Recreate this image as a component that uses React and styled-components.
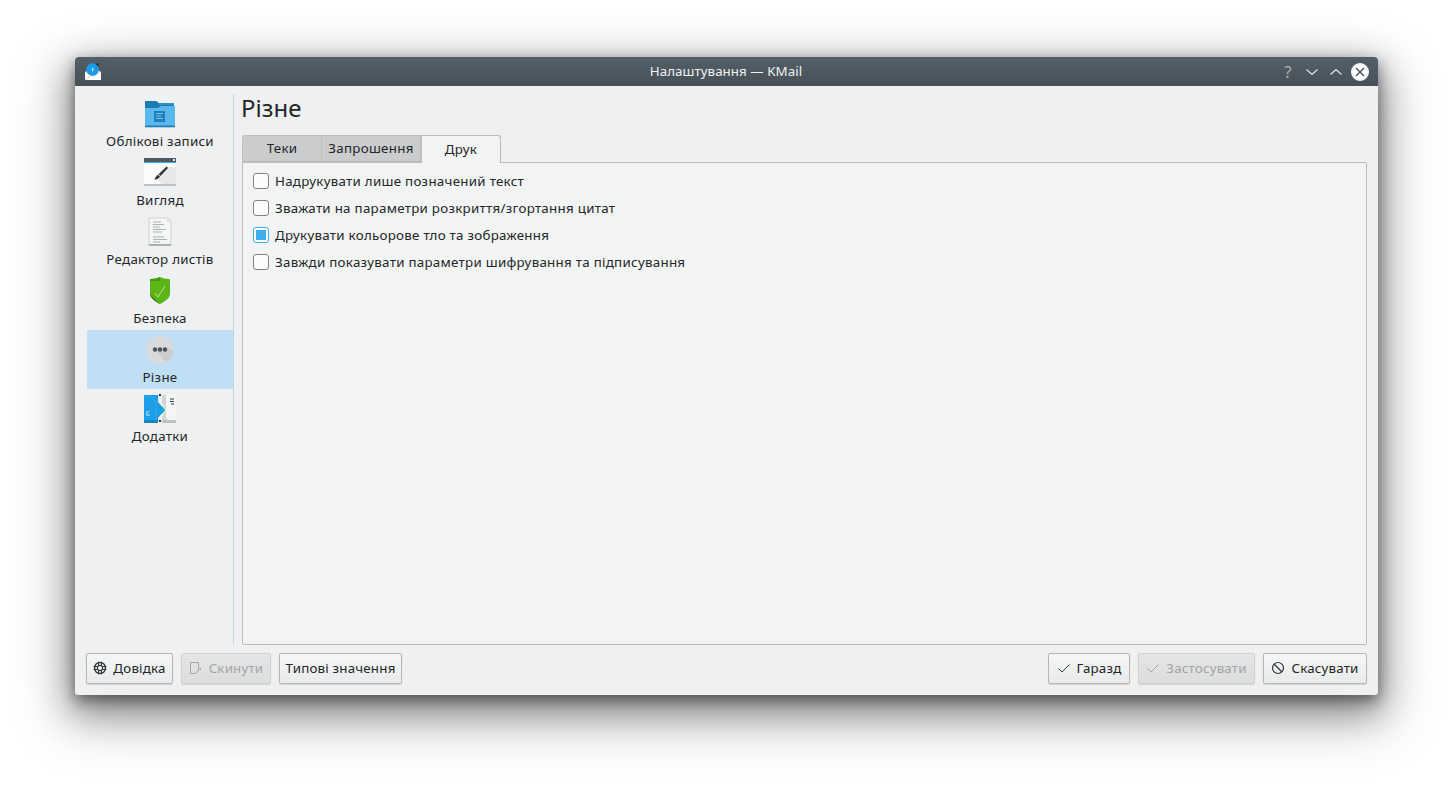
import React from "react";
import styled, { createGlobalStyle } from "styled-components";

const Global = createGlobalStyle`
  html, body { margin: 0; padding: 0; background: #fff; }
  body { font-family: "Noto Sans", sans-serif; font-size: 13.33px; letter-spacing: .28px; color: #232627; }
  * { box-sizing: border-box; }
`;
const Page = styled.div`
  width: 1453px; height: 788px; padding: 57px 75px 93px; overflow: hidden; background: #fff;
`;
const Win = styled.div`
  width: 1303px; height: 638px; display: flex; flex-direction: column;
  background: #eff0f1; border-radius: 4px 4px 3px 3px;
  box-shadow: 0 5px 14px rgba(0,0,0,.42), 0 14px 34px 4px rgba(0,0,0,.34), 0 18px 56px 10px rgba(0,0,0,.22);
`;
const TitleBar = styled.div`
  height: 29px; flex: none; display: flex; align-items: center; position: relative; padding: 0 9px 0 9px;
  background: linear-gradient(#535f68, #475057); border-radius: 4px 4px 0 0; color: #eff0f1;
`;
const TitleText = styled.div`
  position: absolute; left: 0; right: 0; top: 5px; text-align: center; line-height: 18px; letter-spacing: .05px; padding-right: 1px;
`;
const TitleIcons = styled.div`
  margin-left: auto; display: flex; align-items: center; gap: 6px; position: relative;
`;
const Help = styled.span`
  width: 18px; text-align: center; font-size: 16px; line-height: 18px; color: #aab0b4;
`;
const Body = styled.div`
  flex: 1; min-height: 0; display: flex; flex-direction: column; padding: 8px 11px 11px 11px;
`;
const Main = styled.div`
  flex: 1; min-height: 0; display: flex;
`;
const Sidebar = styled.div`
  width: 147px; margin-left: 1px; flex: none; border-right: 1px solid #c5d5e0;
`;
const Item = styled.div`
  height: 59px; display: flex; flex-direction: column; align-items: center; padding-top: 5px;
  background: ${p => (p.$on ? "#c0def4" : "transparent")};
  svg { display: block; flex: none; }
`;
const ItemLabel = styled.div`
  margin-top: 1px; line-height: 18px; white-space: nowrap;
`;
const Content = styled.div`
  flex: 1; min-width: 0; display: flex; flex-direction: column; padding-left: 8px;
`;
const Heading = styled.h1`
  margin: 0 0 8px -1px; font-weight: 400; font-size: 24px; line-height: 27px; height: 33px; letter-spacing: 0;
`;
const Tabs = styled.div`
  display: flex; height: 28px; flex: none; position: relative; z-index: 1; margin-bottom: -1px;
`;
const Tab = styled.div`
  width: ${p => p.$w}px; height: ${p => (p.$on ? 28 : 27)}px;
  display: flex; align-items: center; justify-content: center;
  background: ${p => (p.$on ? "#f2f3f3" : "#cbcccd")};
  border: 1px solid ${p => (p.$on ? "#b9bbbc" : "#bdbfc0")};
  border-bottom: ${p => (p.$on ? "none" : "1px solid #b9bbbc")};
  border-left: ${p => (p.$first || p.$on ? "" : "none")};
  border-radius: ${p => (p.$first ? "3px 0 0 0" : p.$on ? "0 3px 0 0" : "0")};
  padding-bottom: 1px;
`;
const Panel = styled.div`
  flex: 1; min-height: 0; background: #f2f3f3; border: 1px solid #b9bbbc; border-radius: 0 2px 2px 2px;
  padding: 4px 10px; display: flex; flex-direction: column;
`;
const CheckRow = styled.label`
  height: 27px; display: flex; align-items: center; gap: 6px; white-space: nowrap;
`;
const Box = styled.span`
  width: 16px; height: 16px; flex: none; display: flex; align-items: center; justify-content: center;
  border-radius: 3px; background: #fcfcfc;
  border: 1px solid ${p => (p.$on ? "#3daee9" : "#7f8284")};
  &::after { content: ""; width: 10px; height: 10px; background: ${p => (p.$on ? "#3daee9" : "transparent")}; }
`;
const Footer = styled.div`
  flex: none; display: flex; align-items: center; padding-top: 8px;
`;
const Group = styled.div`
  display: flex; gap: 8px; margin-left: ${p => (p.$right ? "auto" : 0)};
`;
const Btn = styled.div`
  height: 31px; width: ${p => p.$w}px; display: flex; align-items: center; justify-content: center; gap: 6px;
  border-radius: 2px; white-space: nowrap; letter-spacing: .2px; padding-bottom: 1px;
  color: ${p => (p.$off ? "#a3a5a6" : "#232627")};
  border: 1px solid ${p => (p.$off ? "#d0d1d2" : "#b4b6b7")};
  background: ${p => (p.$off ? "linear-gradient(#e4e5e6,#dcdddd)" : "linear-gradient(#f5f6f6,#e9eaeb)")};
  box-shadow: 0 1px 1px rgba(0,0,0,.12);
  svg { flex: none; display: block; }
`;

const MailIcon = () => (
  <svg width="18" height="18" viewBox="0 0 18 18" style={{ display: "block" }}>
    <path d="M1 9 L9 4 L17 9 V17 H1 Z" fill="#e9ecee" />
    <circle cx="8.500" cy="6.500" r="6.300" fill="#1c9ce8" />
    <path d="M11 0.500 L14.500 0.500 L14.500 4 Z" fill="#22333f" />
    <path d="M1 9.500 L9 14 L17 9.500 V17 H1 Z" fill="#fcfcfc" />
    <path d="M1 17 L7 12.500" stroke="#d5d8da" strokeWidth="1" />
    <path d="M8 4 l2 2.500-2 2.500z" fill="#bfe4f9" />
  </svg>
);
const Chevron = ({ up }) => (
  <svg width="18" height="18" viewBox="0 0 18 18">
    <path d={up ? "M3.500 11.500 L9 6.500 L14.500 11.500" : "M3.500 6.500 L9 11.500 L14.500 6.500"} stroke="#e6e8e9" strokeWidth="1.100" fill="none" />
  </svg>
);
const CloseBtn = () => (
  <svg width="18" height="18" viewBox="0 0 18 18">
    <circle cx="9" cy="9" r="9" fill="#fcfcfc" />
    <path d="M5 5 L13 13 M13 5 L5 13" stroke="#4d565d" strokeWidth="1.500" />
  </svg>
);
const FolderIcon = () => (
  <svg width="32" height="32" viewBox="0 0 32 32">
    <path d="M1 2 H12 L15 4 H30 V11 H1 Z" fill="#1a7cb3" />
    <path d="M15 4 H30 V6 H15 Z" fill="#2d93cd" />
    <path d="M1 9 L14 9 L17 7 H31 V28 H1 Z" fill="#5bb8ed" />
    <rect x="1" y="26.500" width="30" height="1.800" fill="#1f7fb8" />
    <rect x="10" y="12" width="11" height="11" fill="#1f7fb8" />
    <path d="M12 14.500h7M12 17h5M12 19.500h7" stroke="#7cc6ee" strokeWidth="1" />
  </svg>
);
const AppearanceIcon = () => (
  <svg width="32" height="32" viewBox="0 0 32 32">
    <rect x="0" y="0" width="32" height="4" fill="#4e5a63" />
    <rect x="29" y="1" width="2" height="2" fill="#e8eaeb" />
    <rect x="0" y="4" width="32" height="1.200" fill="#3daee9" />
    <rect x="0" y="5" width="32" height="23" fill="#fcfcfc" />
    <path d="M12 21 L23 9 H32 V26 H18 Z" fill="#e6e8e9" />
    <rect x="0" y="26" width="32" height="2" fill="#bfc2c4" />
    <path d="M22.500 8.500 C23.500 8.500 24 9.500 23.500 10.500 L16.500 18 L14.500 16.300 Z" fill="#31363b" />
    <path d="M14 16.800 L16 18.600 C15 21 12.500 21.800 10 21.500 C11.500 20.500 11.500 18 14 16.800Z" fill="#31363b" />
  </svg>
);
const DocIcon = () => (
  <svg width="32" height="32" viewBox="0 0 32 32">
    <path d="M5 1 H24 L27 4 V28.500 H5 Z" fill="#f4f5f5" stroke="#cfd1d3" strokeWidth="1" />
    <rect x="5" y="27" width="22" height="1.800" fill="#a9acae" />
    <path d="M23 1 V5 H27" fill="#e1e3e4" />
    <path d="M9 5h8M9 7.500h11M9 10h7M9 12.500h13M9 15h9M9 20h11M9 22.500h14M9 25h7" stroke="#aeb1b3" strokeWidth="1" />
  </svg>
);
const ShieldIcon = () => (
  <svg width="32" height="32" viewBox="0 0 32 32">
    <path d="M16 1 L20 2.500 L25 3 C26 3 26 4 26 4 V18 C26 22 20 26 16 28 C12 26 6 22 6 18 V4 C6 4 6 3 7 3 L12 2.500Z" fill="#5bb514" />
    <path d="M16 1 L12 2.500 L7 3 C6 3 6 4 6 4 V5 L16 5 Z" fill="#4a9416" />
    <path d="M6 4 V18 C6 22 12 26 16 28 L6 18Z" fill="#46801f" />
    <path d="M11 17 L14 21 L21 10" stroke="#c9e8a8" strokeWidth=".900" fill="none" />
  </svg>
);
const MiscIcon = () => (
  <svg width="32" height="32" viewBox="0 0 32 32">
    <circle cx="16" cy="15" r="14" fill="#d8dadb" />
    <path d="M11 15 L22 27 A14 14 0 0 0 30 16 L25 13Z" fill="#caccce" />
    <circle cx="11" cy="14.500" r="2.200" fill="#4d5257" />
    <circle cx="16" cy="14.500" r="2.200" fill="#4d5257" />
    <circle cx="21" cy="14.500" r="2.200" fill="#4d5257" />
  </svg>
);
const PluginIcon = () => (
  <svg width="32" height="32" viewBox="0 0 32 32">
    <rect x="0" y="1" width="14" height="28" fill="#1c9fe8" />
    <rect x="0" y="26" width="14" height="3" fill="#1686c4" />
    <path d="M2 3 H7 L12 8 V26" stroke="#3fa9de" fill="none" strokeWidth="1" />
    <path d="M3 17v5M5 17v1M5 20v2" stroke="#cfeaf9" strokeWidth="1" />
    <path d="M14 8 L21 16 L14 24 Z" fill="#1c9fe8" />
    <path d="M18 1 H32 V29 H18 V23 L22 16 L18 9 Z" fill="#d3d5d7" />
    <path d="M22 1 H32 V26 H24 L22 23 Z" fill="#f4f5f5" />
    <path d="M18.500 12 L21 16 L18.500 20Z" fill="#1abc9c" />
    <rect x="18" y="26" width="14" height="3" fill="#bfc2c4" />
    <path d="M26 5h4M26 7.500h4M27 10h3" stroke="#31363b" strokeWidth="1" />
    <path d="M15 0h2v2h-2zM15 26h2v2h-2z" fill="#31363b" />
  </svg>
);
const LifeIcon = () => (
  <svg width="14" height="14" viewBox="0 0 14 14" fill="none" stroke="#31363b">
    <circle cx="7" cy="7" r="5.500" strokeWidth="1.400" />
    <circle cx="7" cy="7" r="2.600" strokeWidth="1.100" />
    <path d="M5.500 .8V4.500M8.500 .8V4.500M5.500 9.500V13.200M8.500 9.500V13.200M.8 5.500H4.500M.8 8.500H4.500M9.500 5.500H13.200M9.500 8.500H13.200" strokeWidth="1" />
  </svg>
);
const ResetIcon = () => (
  <svg width="14" height="14" viewBox="0 0 14 14" fill="none" stroke="#a3a5a6">
    <path d="M1.500 1.500 H9.500 V9 L6.500 12.500 H1.500 Z" />
    <path d="M12 6.500 l-2 1.500 l2 1.500z" fill="#a3a5a6" stroke="none" />
  </svg>
);
const CheckIcon = ({ off }) => (
  <svg width="14" height="14" viewBox="0 0 14 14" fill="none" stroke={off ? "#a3a5a6" : "#31363b"}>
    <path d="M1.500 7.500 L5 11 L12.500 3.500" strokeWidth="1" />
  </svg>
);
const CancelIcon = () => (
  <svg width="14" height="14" viewBox="0 0 14 14" fill="none" stroke="#31363b" strokeWidth="1.200">
    <circle cx="7" cy="7" r="5.500" />
    <path d="M3 3 L11 11" />
  </svg>
);

const nav = [
  ["Облікові записи", FolderIcon],
  ["Вигляд", AppearanceIcon],
  ["Редактор листів", DocIcon],
  ["Безпека", ShieldIcon],
  ["Різне", MiscIcon],
  ["Додатки", PluginIcon],
];
const checks = [
  ["Надрукувати лише позначений текст", false],
  ["Зважати на параметри розкриття/згортання цитат", false],
  ["Друкувати кольорове тло та зображення", true],
  ["Завжди показувати параметри шифрування та підписування", false],
];

export default function App() {
  return (
    <Page>
      <Global />
      <Win>
        <TitleBar>
          <MailIcon />
          <TitleText>Налаштування — KMail</TitleText>
          <TitleIcons>
            <Help>?</Help>
            <Chevron />
            <Chevron up />
            <CloseBtn />
          </TitleIcons>
        </TitleBar>
        <Body>
          <Main>
            <Sidebar>
              {nav.map(([label, Icon]) => (
                <Item key={label} $on={label === "Різне"}>
                  <Icon />
                  <ItemLabel>{label}</ItemLabel>
                </Item>
              ))}
            </Sidebar>
            <Content>
              <Heading>Різне</Heading>
              <Tabs>
                <Tab $w={80} $first>Теки</Tab>
                <Tab $w={99}>Запрошення</Tab>
                <Tab $w={80} $on>Друк</Tab>
              </Tabs>
              <Panel>
                {checks.map(([label, on]) => (
                  <CheckRow key={label}>
                    <Box $on={on} />
                    {label}
                  </CheckRow>
                ))}
              </Panel>
            </Content>
          </Main>
          <Footer>
            <Group>
              <Btn $w={87}><LifeIcon />Довідка</Btn>
              <Btn $w={90} $off><ResetIcon />Скинути</Btn>
              <Btn $w={123}>Типові значення</Btn>
            </Group>
            <Group $right>
              <Btn $w={82}><CheckIcon />Гаразд</Btn>
              <Btn $w={117} $off><CheckIcon off />Застосувати</Btn>
              <Btn $w={104}><CancelIcon />Скасувати</Btn>
            </Group>
          </Footer>
        </Body>
      </Win>
    </Page>
  );
}
